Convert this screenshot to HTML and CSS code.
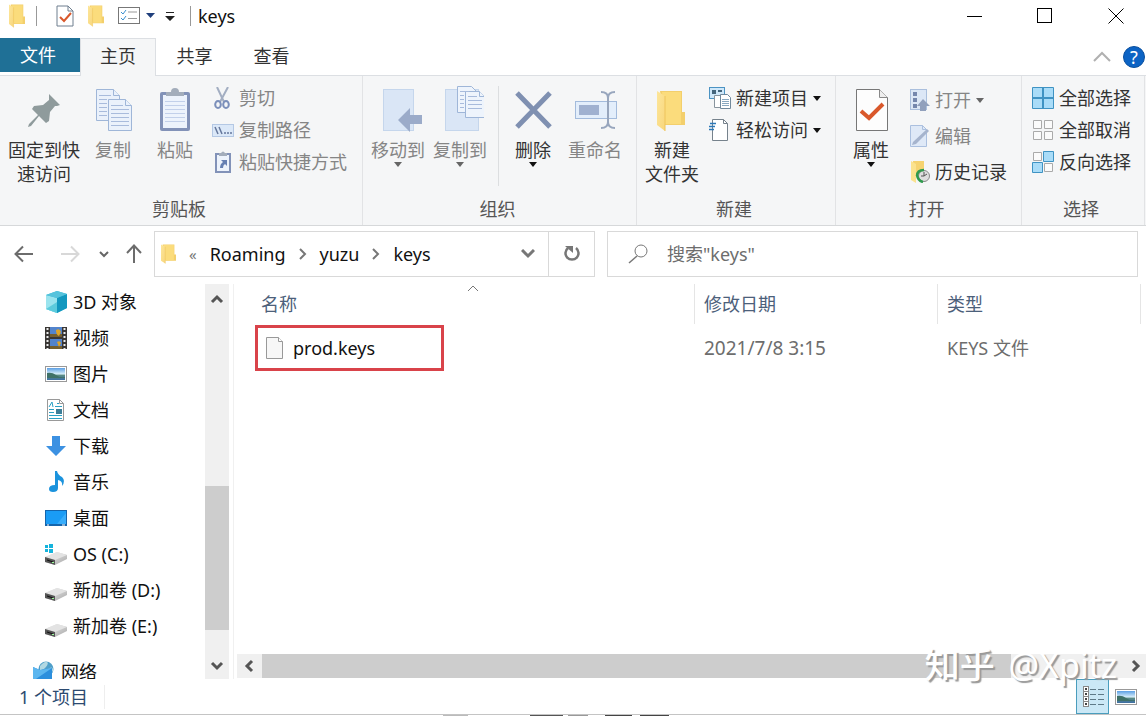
FILE: index.html
```html
<!DOCTYPE html>
<html lang="zh-CN">
<head>
  <meta charset="UTF-8" />
  <meta name="viewport" content="width=device-width, initial-scale=1.0" />
  <title>keys</title>
  <link rel="stylesheet" href="styles.css">
</head>
<body>
  <!-- shared icons -->
  <svg class="defs" aria-hidden="true">
    <linearGradient id="gFold" x1="0" y1="0" x2="1" y2="1"><stop offset="0" stop-color="#fde69a"/><stop offset="1" stop-color="#f8d67c"/></linearGradient>
    <linearGradient id="gSky" x1="0" y1="0" x2="0" y2="1"><stop offset="0" stop-color="#5b9fe4"/><stop offset="0.5" stop-color="#d8eefa"/><stop offset="0.6" stop-color="#5b8c84"/><stop offset="1" stop-color="#3d6ea5"/></linearGradient>
    <linearGradient id="gDrive" x1="0" y1="0" x2="1" y2="1"><stop offset="0" stop-color="#f2f2f2"/><stop offset="1" stop-color="#a8a8a8"/></linearGradient>
    <symbol id="folder" viewBox="0 0 28 42" preserveAspectRatio="none">
      <path d="M3 1h22v21h3v13H8z" fill="#f3cf6c"/>
      <path d="M5 2h19v32H8z" fill="#fbdc7c"/>
      <path d="M0 1l8 5v35l-8-6z" fill="url(#gFold)"/>
      <path d="M8 6v35" stroke="#eec45c"/>
    </symbol>
    <symbol id="photo" viewBox="0 0 22 16">
      <rect x="0.5" y="0.5" width="21" height="15" fill="#fff" stroke="#999"/>
      <rect x="2" y="2" width="18" height="12" fill="url(#gSky)"/>
      <path d="M2 7q5-1 9 2t9 2v1H2z" fill="#3f7168"/>
    </symbol>
    <symbol id="drive" viewBox="0 0 22 14">
      <path d="M0 6L12 1l10 3v4L10 14 0 11z" fill="url(#gDrive)"/>
      <path d="M0 6L12 1l10 3-12 5z" fill="#e3e3e3"/>
      <path d="M0 6l10 3v5L0 11z" fill="#555"/>
      <path d="M2 8.500l6 2v1l-6-2z" fill="#111"/>
      <path d="M7 11h2v1H7z" fill="#9f9"/>
    </symbol>
  </svg>

  <header class="titlebar">
    <svg class="tb-folder" width="16" height="24"><use href="#folder"/></svg>
    <span class="tb-sep"></span>
    <button class="tb-btn" aria-label="属性">
      <svg width="18" height="22" viewBox="0 0 18 22"><path d="M1 1h11l5 5v15H1z" fill="#fff" stroke="#6f7f8f"/><path d="M12 1v5h5" fill="none" stroke="#6f7f8f"/><path d="M4 12l4 4 7-8" fill="none" stroke="#d9582b" stroke-width="2"/></svg>
    </button>
    <button class="tb-btn" aria-label="新建文件夹"><svg width="16" height="22"><use href="#folder"/></svg></button>
    <button class="tb-btn tb-list" aria-label="选项">
      <svg width="38" height="18" viewBox="0 0 38 18"><rect x="0.500" y="0.500" width="21" height="16" fill="#fff" stroke="#777"/><path d="M3 5l2 2 3-4M3 11l2 2 3-4" fill="none" stroke="#3a8fd0"/><path d="M10 5h9M10 11.500h9" stroke="#999"/><path d="M28 6h9l-4.500 5z" fill="#1f3f7c"/></svg>
    </button>
    <button class="tb-btn tb-more" aria-label="自定义快速访问工具栏"><svg width="10" height="9"><path d="M1 0h8v1H1zM0 4h10L5 9z" fill="#222"/></svg></button>
    <span class="tb-sep"></span>
    <span class="tb-title">keys</span>
    <div class="win-btns">
      <button aria-label="最小化"><svg width="16" height="16"><path d="M0 8.500h15" stroke="#000"/></svg></button>
      <button aria-label="最大化"><svg width="16" height="16"><rect x="0.500" y="0.500" width="14" height="14" fill="none" stroke="#000"/></svg></button>
      <button aria-label="关闭"><svg width="16" height="16"><path d="M0.500 0.500l15 15M15.500 0.500l-15 15" stroke="#000"/></svg></button>
    </div>
  </header>

  <nav class="tabs">
    <button class="tab file">文件</button>
    <button class="tab active">主页</button>
    <button class="tab">共享</button>
    <button class="tab">查看</button>
    <button class="fold" aria-label="折叠功能区"><svg width="18" height="12"><path d="M1 10l8-8 8 8" fill="none" stroke="#b0b0b0" stroke-width="2"/></svg></button>
    <button class="help" aria-label="帮助">?</button>
  </nav>

  <section class="ribbon">
    <div class="group">
      <div class="tools">
        <button class="big wide">
          <svg width="48" height="52"><path d="M29 8l11 11-3 1-2 0-5 6-1 9-3 2-7-7-8 10-3 1 1-3 9-9-6-6 2-3 9-1 6-5v-3z" fill="#8f9b9c"/></svg>
          固定到快速访问
        </button>
        <button class="big dim">
          <svg width="48" height="52"><g fill="#eaf1fb" stroke="#9fb6d8"><path d="M7.500 3.500h17l6 6v25h-23z"/><path d="M24.500 3.500v6h6" /><path d="M19.500 13.500h17l6 6v25h-23z"/><path d="M36.500 13.500v6h6"/></g><path d="M10 9.500h12M10 13.500h8M10 17.500h8M10 21.500h8M10 25.500h8M10 29.500h8M22 19.500h12M22 23.500h18M22 27.500h18M22 31.500h18M22 35.500h18M22 39.500h18" stroke="#a8bbdc"/></svg>
          复制
        </button>
        <button class="big dim">
          <svg width="48" height="52"><rect x="9" y="6" width="30" height="39" rx="2" fill="#8292b8"/><rect x="12" y="9" width="24" height="33" fill="#edf3fc"/><path d="M15 10V6h5q0-4 4-4t4 4h5v4z" fill="#a3adbb"/><path d="M14 15.500h20M14 19.500h20M14 23.500h20M14 27.500h20M14 31.500h20M14 35.500h20" stroke="#c2d0ea"/></svg>
          粘贴
        </button>
        <div class="small-col">
          <button class="small dim"><svg width="22" height="22"><path d="M5 0l7 15M16 0L8 15" stroke="#a3aec2" stroke-width="2" fill="none"/><ellipse cx="6" cy="17.500" rx="2.800" ry="3.500" fill="none" stroke="#7b8fba" stroke-width="2"/><ellipse cx="14" cy="17.500" rx="2.800" ry="3.500" fill="none" stroke="#7b8fba" stroke-width="2"/></svg>剪切</button>
          <button class="small dim"><svg width="22" height="22"><rect x="0.500" y="5.500" width="21" height="12" fill="#dbe8f8" stroke="#b4c8e4"/><path d="M3 8l3 7M7 8l3 7M12 14h2M15 14h2M18 14h2" stroke="#65779c" stroke-width="1.500"/></svg>复制路径</button>
          <button class="small dim"><svg width="22" height="22"><rect x="4" y="3" width="14" height="18" fill="#edf3fc" stroke="#8292b8" stroke-width="2"/><path d="M7 5V2h2q2-3 4 0h2v3z" fill="#a3adbb"/><path d="M8 17q0-4 3-6l-2-2h6v6l-2-2q-2 1-2 4z" fill="#6680b3"/></svg>粘贴快捷方式</button>
        </div>
      </div>
      <div class="group-name">剪贴板</div>
    </div>

    <div class="group">
      <div class="tools tight">
        <button class="big dim">
          <svg width="48" height="52"><rect x="9.500" y="3.500" width="30" height="41" fill="#dae6f6" stroke="#c5d6ec"/><path d="M24 34l12-12v7h12v9H36v8z" fill="#9babc9"/></svg>
          移动到<i class="arrow"></i>
        </button>
        <button class="big dim">
          <svg width="48" height="52"><rect x="9.500" y="3.500" width="33" height="41" fill="#dae6f6" stroke="#c5d6ec"/><g fill="#eef4fc" stroke="#9fb6d8"><path d="M21.500 0.500h14l5 5v21h-19z"/><path d="M29.500 5.500h14l5 5v21h-19z"/><path d="M43.500 5.500v5h5"/></g><path d="M24 5.500h9M24 9.500h4M24 13.500h4M24 17.500h4M24 21.500h4M32 10.500h9M32 14.500h14M32 18.500h14M32 22.500h14" stroke="#a8bbdc"/></svg>
          复制到<i class="arrow"></i>
        </button>
        <span class="split"></span>
        <button class="big">
          <svg width="48" height="52"><path d="M8 7l33 34M41 7L8 41" stroke="#7f90b1" stroke-width="5"/></svg>
          删除<i class="arrow"></i>
        </button>
        <button class="big dim">
          <svg width="48" height="52"><rect x="4.500" y="15.500" width="41" height="17" fill="#e3eefb" stroke="#a3bbdc"/><rect x="8" y="19" width="20" height="10" fill="#a0b1d0"/><path d="M30 6q7 0 7 6v24q0 6-7 6M44 6q-7 0-7 6M44 42q-7 0-7-6" fill="none" stroke="#98a6bd" stroke-width="2"/></svg>
          重命名
        </button>
      </div>
      <div class="group-name">组织</div>
    </div>

    <div class="group">
      <div class="tools tight">
        <button class="big">
          <svg width="48" height="52"><use href="#folder" x="9" y="4" width="28" height="42"/></svg>
          新建<br>文件夹
        </button>
        <div class="small-col">
          <button class="small"><svg width="22" height="22"><rect x="0.500" y="0.500" width="15" height="11" fill="#cfe8fa" stroke="#4b93c3"/><path d="M3 3h4v4H3zM9 3h4v2H9z" fill="#44657c"/><path d="M5.500 8.500h9v12h-9z" fill="#fff" stroke="#89959e"/><path d="M11.500 7.500h7l3 3v11h-10z" fill="#fff" stroke="#71899c"/><path d="M13 12.500h7M13 14.500h7M13 16.500h7M13 18.500h7" stroke="#89a8c0"/></svg>新建项目<i class="arrow"></i></button>
          <button class="small"><svg width="22" height="22"><path d="M3.500 0.500h11l4 4v17h-15z" fill="#fff" stroke="#76828c"/><path d="M14.500 0.500v4h4" fill="none" stroke="#76828c"/><path d="M1 4.500h6M0 7.500h6M0 10.500h5" stroke="#2b78b8" stroke-width="1.500"/></svg>轻松访问<i class="arrow"></i></button>
        </div>
      </div>
      <div class="group-name">新建</div>
    </div>

    <div class="group">
      <div class="tools tight">
        <button class="big">
          <svg width="48" height="52"><path d="M9.500 3.500h23l8 8v33h-31z" fill="#fdfdfd" stroke="#777"/><path d="M32.500 3.500v8h8" fill="#eee" stroke="#888"/><path d="M14 25l8 7 14-14" fill="none" stroke="#d9582b" stroke-width="4"/></svg>
          属性<i class="arrow"></i>
        </button>
        <div class="small-col tall">
          <button class="small dim"><svg width="22" height="22"><rect x="2.500" y="0.500" width="16" height="20" fill="#dce7f6" stroke="#aabfdd"/><path d="M5 3h4v4H5zM5 9h4v4H5zM5 15h4v4H5z" fill="#7587ad"/><path d="M15 10l7 7h-4v5h-6v-5H9z" fill="#91a0bc"/></svg>打开<i class="arrow"></i></button>
          <button class="small dim"><svg width="22" height="22"><path d="M2.500 0.500h12l4 4v17h-16z" fill="#dfe9f7" stroke="#abc0df"/><path d="M14.500 0.500v4h4" fill="none" stroke="#abc0df"/><path d="M5 17L19 4l2 2L8 19l-4 1z" fill="#a6b4cd"/></svg>编辑</button>
          <button class="small"><svg width="22" height="22"><path d="M5 0h11v14H5z" fill="#f6d370"/><path d="M3 0l5 3v19l-5-3z" fill="#fbe28e"/><circle cx="16" cy="15" r="5.500" fill="#dedede" stroke="#888"/><path d="M16 11v4l3-2M16 15h-3" fill="none" stroke="#555"/><path d="M9 15q0-6 7-6M9 14q1 6 6 7" fill="none" stroke="#2f9a4d" stroke-width="2.500"/></svg>历史记录</button>
        </div>
      </div>
      <div class="group-name">打开</div>
    </div>

    <div class="group last">
      <div class="tools tight">
        <div class="small-col">
          <button class="small"><svg width="22" height="22"><path d="M0.500 0.500h21v21h-21z" fill="#a9dcf8" stroke="#3f93c3"/><path d="M11 1v20M1 11h20" stroke="#3f93c3" stroke-width="2"/></svg>全部选择</button>
          <button class="small"><svg width="22" height="22" fill="#fbfbfb" stroke="#aaa"><path d="M1.500 1.500h8v8h-8zM12.500 1.500h8v8h-8zM1.500 12.500h8v8h-8zM12.500 12.500h8v8h-8z"/></svg>全部取消</button>
          <button class="small"><svg width="22" height="22"><path d="M1.500 1.500h8v8h-8zM12.500 12.500h8v8h-8z" fill="#fbfbfb" stroke="#aaa"/><path d="M11.500 0.500h10v10h-10zM0.500 11.500h10v10h-10z" fill="#a9dcf8" stroke="#3f93c3"/></svg>反向选择</button>
        </div>
      </div>
      <div class="group-name">选择</div>
    </div>
  </section>

  <section class="addressbar">
    <div class="history">
      <button aria-label="后退"><svg width="20" height="18"><path d="M19 9H2M9 1.500L1.500 9 9 16.500" fill="none" stroke="#6c6c6c" stroke-width="2"/></svg></button>
      <button aria-label="前进"><svg width="20" height="18"><path d="M1 9h17M11 1.500L18.500 9 11 16.500" fill="none" stroke="#d8d8d8" stroke-width="2"/></svg></button>
      <button class="recent" aria-label="最近浏览的位置"><svg width="10" height="8"><path d="M1 2l4 4 4-4" fill="none" stroke="#666" stroke-width="2"/></svg></button>
      <button class="up" aria-label="上移"><svg width="16" height="20"><path d="M8 19V2M1 9l7-7.500L15 9" fill="none" stroke="#6c6c6c" stroke-width="2"/></svg></button>
    </div>
    <div class="path">
      <svg width="15" height="20"><use href="#folder"/></svg>
      <span class="laquo">«</span>
      <a href="#">Roaming</a>
      <svg width="8" height="12"><path d="M1 1l5 5-5 5" fill="none" stroke="#777" stroke-width="2"/></svg>
      <a href="#">yuzu</a>
      <svg width="8" height="12"><path d="M1 1l5 5-5 5" fill="none" stroke="#777" stroke-width="2"/></svg>
      <a href="#">keys</a>
      <button class="drop" aria-label="以前的位置"><svg width="14" height="10"><path d="M1 1l6 6 6-6" fill="none" stroke="#777" stroke-width="3"/></svg></button>
      <button class="refresh" aria-label="刷新"><svg width="18" height="20"><path d="M13 4a6.500 6.500 0 1 1-8 0" fill="none" stroke="#777" stroke-width="2.500"/><path d="M2 2h8v7z" fill="#777"/></svg></button>
    </div>
    <label class="search">
      <svg width="20" height="20"><circle cx="13" cy="7" r="6" fill="none" stroke="#777"/><path d="M9 12l-8 7" stroke="#777" stroke-width="1.500"/></svg>
      <input type="text" placeholder="搜索&quot;keys&quot;" aria-label="搜索" />
    </label>
  </section>

  <main class="main">
    <aside class="sidebar">
      <ul class="tree">
        <li><svg width="22" height="22"><path d="M1 4l11-4 10 3v14l-10 5-11-4z" fill="#35b8d6"/><path d="M1 4l11 3v15L1 18z" fill="#9be4ee"/><path d="M1 18l11-7v11z" fill="#5ccbdc"/><path d="M12 7l10-4v14l-10 5z" fill="#1398bf"/><path d="M1 4l11-4 10 3-10 4z" fill="#56c3dc"/></svg><a href="#">3D 对象</a></li>
        <li><svg width="22" height="22"><path d="M0 0h22v22H0z" fill="#393634"/><path d="M5 0h12v10H5zM5 12h12v10H5z" fill="#5384cc"/><path d="M5 7h12v3H5zM5 19h12v3H5z" fill="#765f2c"/><path d="M11 3q4-2 5 2l-2 4q-3-1-3-6zM12 15q3-2 4 1l-2 4z" fill="#dfa527"/><path d="M2.500 1v21M19.500 1v21" stroke="#eee" stroke-width="2" stroke-dasharray="2 2"/></svg><a href="#">视频</a></li>
        <li><svg width="22" height="16"><use href="#photo"/></svg><a href="#">图片</a></li>
        <li><svg width="22" height="22"><path d="M2.500 0.500h12l4 4v17h-16z" fill="#fff" stroke="#999"/><path d="M14.500 0.500v4h4" fill="none" stroke="#999"/><path d="M4 8l3-5 1 5M12 4.500h2M10 7.500h7M4 10.500h5M4 13.500h5M4 16.500h13M4 19.500h13" fill="none" stroke="#2ba1c5"/><path d="M11 10h6v5h-6z" fill="#3d7e98"/></svg><a href="#">文档</a></li>
        <li><svg width="22" height="22"><path d="M7 1h8v10h6L11 21 1 11h6z" fill="#3c91e2"/></svg><a href="#">下载</a></li>
        <li><svg width="22" height="22"><path d="M10 0h2q1 4 5 6 4 4 0 9 1-5-4-6v8q0 4-5 4-4 0-4-3 0-4 6-4z" fill="#1b93dd"/></svg><a href="#">音乐</a></li>
        <li><svg width="22" height="16"><path d="M0 0h22v16H0z" fill="#1565ac"/><path d="M1 1h20v13H1z" fill="#1a9cf5"/><path d="M12 14L21 3v11z" fill="#38adfb"/><path d="M2 15h2M17 15h3" stroke="#fff"/></svg><a href="#">桌面</a></li>
        <li><svg width="22" height="22"><path d="M0 2h3v3H0zM4 1h4v4H4zM0 6h3v3H0zM4 6h4v4H4z" fill="#15b3dc"/><use href="#drive" y="8" width="22" height="14"/></svg><a href="#">OS (C:)</a></li>
        <li><svg width="22" height="22"><use href="#drive" y="8" width="22" height="14"/></svg><a href="#">新加卷 (D:)</a></li>
        <li><svg width="22" height="22"><use href="#drive" y="8" width="22" height="14"/></svg><a href="#">新加卷 (E:)</a></li>
        <li class="root"><svg width="22" height="22"><circle cx="13" cy="8" r="7.500" fill="#4f9fc9"/><path d="M7 5q5-5 7-4t-1 5-6 3zM15 8q4-3 5 0t-4 5z" fill="#b2d8e2"/><path d="M0 6l7 3 12-2v15H0z" fill="#2c8fdd"/><path d="M0 6l7 3 12-2L0 20z" fill="#5cb6ef"/></svg><a href="#">网络</a></li>
      </ul>
      <div class="vscroll">
        <svg width="14" height="10"><path d="M2 8l5-5 5 5" fill="none" stroke="#555" stroke-width="3"/></svg>
        <div class="vtrack"><div class="vthumb"></div></div>
        <svg width="14" height="10"><path d="M2 2l5 5 5-5" fill="none" stroke="#555" stroke-width="3"/></svg>
      </div>
    </aside>

    <section class="files">
      <table>
        <thead>
          <tr>
            <th class="c-name">名称<svg class="sort" width="12" height="7"><path d="M1 6l5-5 5 5" fill="none" stroke="#777"/></svg></th>
            <th class="c-date">修改日期</th>
            <th>类型</th>
          </tr>
        </thead>
        <tbody>
          <tr>
            <td class="name-cell"><a class="marked" href="#"><svg width="18" height="22"><path d="M0.500 0.500h12l4 4v17h-16z" fill="#f7f7f7" stroke="#999"/><path d="M12.500 0.500v4h4" fill="#fff" stroke="#999"/></svg>prod.keys</a></td>
            <td class="date-cell">2021/7/8 3:15</td>
            <td>KEYS 文件</td>
          </tr>
        </tbody>
      </table>
      <div class="hscroll">
        <svg width="10" height="14"><path d="M8 2L3 7l5 5" fill="none" stroke="#555" stroke-width="3"/></svg>
        <div class="htrack"><div class="hthumb"></div></div>
        <svg width="10" height="14"><path d="M2 2l5 5-5 5" fill="none" stroke="#555" stroke-width="3"/></svg>
      </div>
      <div class="watermark"><b>知乎</b> @Xpitz</div>
    </section>
  </main>

  <footer class="status">
    <span class="count">1 个项目</span>
    <div class="views">
      <button class="on" aria-label="详细信息"><svg width="22" height="22"><rect x="0.500" y="0.500" width="5" height="20" fill="#fff" stroke="#888"/><path d="M3 2v2M3 7v2M3 12v2M3 17v2" stroke="#444" stroke-width="2"/><path d="M1 5.500h5M1 10.500h5M1 15.500h5" stroke="#888"/><path d="M7 3.500h6M15 3.500h6M7 8.500h6M15 8.500h6M7 13.500h6M15 13.500h6M7 18.500h6M15 18.500h6" stroke="#5f7a88"/></svg></button>
      <button aria-label="大缩略图"><svg width="22" height="16"><use href="#photo"/></svg></button>
    </div>
  </footer>
  <div class="desk-edge"></div>
</body>
</html>
```
FILE: styles.css
```css
* { box-sizing: border-box; }
body { margin: 0; height: 100vh; display: flex; flex-direction: column; overflow: hidden; background: #fff; color: #111; font-family: "Noto Sans", "Noto Sans CJK SC", sans-serif; font-size: 18px; line-height: 24px; }
button { margin: 0; padding: 0; border: none; background: none; color: inherit; font: inherit; }
a { color: inherit; text-decoration: none; }
svg { display: block; flex: none; }
.defs { position: absolute; width: 0; height: 0; }

/* title bar */
.titlebar { display: flex; align-items: center; height: 38px; padding: 0 0 6px 9px; flex: none; }
.tb-sep { width: 1px; height: 20px; margin: 0 7px 0 11px; background: #999; }
.tb-btn { margin-left: 12px; }
.tb-folder + .tb-sep { margin-right: 7px; }
.tb-btn + .tb-btn { margin-left: 14px; }
.tb-btn + .tb-more { margin-left: 9px; }
.tb-more + .tb-sep { margin-left: 15px; }
.win-btns { display: flex; margin-left: auto; }
.win-btns button { width: 70px; height: 32px; display: flex; align-items: center; justify-content: center; }
.win-btns button:last-child { width: 62px; padding-left: 2px; }
.win-btns button:nth-child(2) { width: 74px; padding-right: 4px; }

/* tabs */
.tabs { display: flex; align-items: center; height: 38px; flex: none; border-bottom: 1px solid #dcdfe3; }
.tab { width: 77px; height: 38px; padding-bottom: 2px; color: #333; }
.tab.file { width: 80px; height: 34px; padding: 0 4px 0 0; align-self: flex-start; background: #1f7096; color: #fff; }
.tab.active { width: 76px; background: #f5f6f7; border: 1px solid #dcdfe3; border-bottom: none; }
.fold { margin-left: auto; margin-right: 12px; }
.help { width: 22px; height: 22px; margin-right: 1px; border-radius: 50%; background: #0c63c4; border: 1px solid #0a4f9e; color: #fff; line-height: 20px; }

/* ribbon */
.ribbon { display: flex; height: 150px; flex: none; background: #f5f6f7; border-bottom: 1px solid #d6d8da; }
.group { display: flex; flex-direction: column; justify-content: space-between; width: 199px; padding: 6px 0 4px; border-right: 1px solid #e2e3e5; }
.group:nth-child(1) { width: 363px; }
.group:nth-child(2) { width: 274px; }
.group:nth-child(4) { width: 186px; }
.group.last { flex: 1; margin-right: 1px; }
.group.last .small-col { padding-left: 6px; }
.group-name { text-align: center; padding-right: 4px; color: #555; }
.tools { display: flex; padding-left: 6px; }
.tools.tight { padding-left: 4px; }
.big { width: 62px; padding-top: 4px; display: block; align-self: flex-start; color: #333; }
.big.wide { width: 76px; }
.big svg { margin: 0 auto; }
.dim { color: #858585; }
.arrow { display: inline-block; border: 4px solid transparent; border-top: 5px solid #111; border-bottom: none; }
.dim .arrow { border-top-color: #666; }
.big .arrow { display: block; width: 8px; margin: 0 auto; }
.big:has(.arrow) { white-space: nowrap; }
.split { width: 1px; height: 100px; margin: 4px 3px 0 7px; background: #dcdee0; }
.small-col { display: flex; flex-direction: column; padding-left: 6px; }
.small { display: flex; align-items: center; gap: 5px; height: 32px; white-space: nowrap; }
.small:not(.dim) { color: #333; }
.tall .small { height: 36px; }

/* address row */
.addressbar { display: flex; align-items: center; height: 57px; flex: none; padding: 0 8px 2px 14px; }
.history { display: flex; align-items: center; width: 140px; gap: 26px; }
.history .recent { margin-left: -7px; }
.history .up { margin-left: -9px; }
.path { display: flex; align-items: center; width: 441px; height: 46px; padding-left: 6px; border: 1px solid #d9d9d9; gap: 13px; }
.path .laquo { color: #777; font-size: 15px; }
.drop { margin-left: auto; }
.refresh { width: 46px; height: 44px; border-left: 1px solid #d9d9d9; display: flex; align-items: center; justify-content: center; }
.search { display: flex; align-items: center; flex: 1; height: 46px; margin-left: 12px; padding-left: 20px; border: 1px solid #d9d9d9; gap: 19px; }
.search input { flex: 1; min-width: 0; padding: 0; border: none; outline: none; background: none; font: inherit; }
.search input::placeholder { color: #6d6d6d; opacity: 1; }

/* body */
.main { display: flex; flex: 1; min-height: 0; padding-top: 1px; }
.sidebar { display: flex; width: 234px; flex: none; border-right: 1px solid #f0f0f0; }
.tree { flex: 1; margin: 0; padding: 0 0 0 45px; list-style: none; overflow: hidden; }
.tree li { display: flex; align-items: center; gap: 6px; height: 36px; white-space: nowrap; }
.tree .root { margin: 10px 0 0 -12px; }
.vscroll { width: 24px; margin-right: 4px; padding: 10px 0 8px; display: flex; flex-direction: column; align-items: center; gap: 14px; background: #f0f0f0; }
.vtrack { display: flex; flex-direction: column; justify-content: flex-end; flex: 1; width: 100%; padding-bottom: 17px; }
.vthumb { height: 46%; background: #cdcdcd; }

.files { position: relative; display: flex; flex-direction: column; flex: 1; min-width: 0; }
table { margin: 0 5px 0 18px; border-collapse: separate; border-spacing: 0; table-layout: fixed; }
th, td { padding: 0 9px; text-align: left; font-weight: normal; color: #6d6d6d; }
th { position: relative; height: 40px; border-right: 1px solid #e5e5e5; color: #4c607a; }
td { height: 48px; }
.c-name { width: 443px; }
.c-date { width: 243px; }
.sort { position: absolute; top: 1px; left: 50%; margin-left: -6px; }
.date-cell { font-size: 19px; }
.name-cell { padding: 0 3px; }
.marked { display: flex; align-items: center; gap: 9px; width: 189px; height: 46px; padding-left: 8px; border: 3px solid #d9434a; color: #111; }
.hscroll { display: flex; align-items: center; gap: 8px; height: 24px; margin: auto 0 1px 3px; padding: 0 5px 0 7px; background: #f0f0f0; }
.htrack { flex: 1; height: 24px; }
.hthumb { width: 87%; height: 24px; background: #cdcdcd; }
.watermark { position: absolute; right: 29px; bottom: -6px; color: #fff; font-size: 34px; line-height: 40px; text-shadow: 2px 2px 1px #999; white-space: nowrap; }
.watermark b { margin-right: 5px; font-size: 35px; font-weight: 500; }

/* status bar */
.status { display: flex; align-items: center; justify-content: space-between; height: 35px; flex: none; padding: 0 9px 0 19px; color: #2c4a70; }
.count { padding-right: 16px; border-right: 1px solid #eee; }
.views { display: flex; align-items: center; gap: 6px; }
.views button { height: 35px; }
.views .on { width: 33px; padding-left: 6px; background: #cbe8f6; border: 1px solid #4a9dbd; }
.desk-edge { height: 2px; flex: none; border-top: 1px solid #c4c4c4; background: linear-gradient(90deg, #fff 443px, #bbb 443px, #bbb 468px, #fff 468px, #fff 530px, #555 530px, #555 563px, #fff 563px, #fff 568px, #999 568px, #999 588px, #fff 588px, #fff 605px, #444 605px, #444 632px, #fff 632px, #fff 640px, #444 640px, #444 669px, #fff 669px); }
```
